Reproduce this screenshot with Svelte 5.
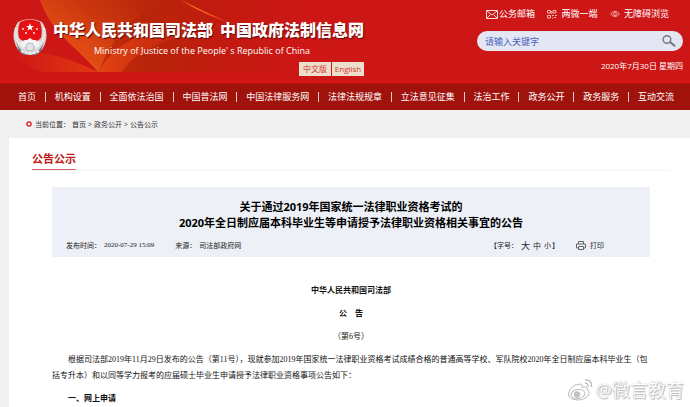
<script>
  const navItems = [
    "首页",
    "机构设置",
    "全面依法治国",
    "中国普法网",
    "中国法律服务网",
    "法律法规规章",
    "立法意见征集",
    "法治工作",
    "政务公开",
    "政务服务",
    "互动交流",
  ];

  let keyword = $state("");
</script>

<div class="page">
  <header>
    <svg class="swoosh" viewBox="0 0 300 72" aria-hidden="true">
      <defs>
        <linearGradient id="glow" x1="0" x2="1" y1="0" y2="0">
          <stop offset="0" stop-color="#d8380f" />
          <stop offset="0.15" stop-color="#c8300c" />
          <stop offset="0.4" stop-color="#b8260a" />
          <stop offset="0.65" stop-color="#c01c0e" />
          <stop offset="1" stop-color="#cd1616" />
        </linearGradient>
        <linearGradient id="flare" x1="0" x2="1" y1="1" y2="0">
          <stop offset="0" stop-color="#f05a1c" />
          <stop offset="0.4" stop-color="#e04c14" stop-opacity="0.8" />
          <stop offset="1" stop-color="#b72b0a" stop-opacity="0" />
        </linearGradient>
        <linearGradient id="corner" x1="0" x2="1" y1="0" y2="0">
          <stop offset="0" stop-color="#cd1616" />
          <stop offset="1" stop-color="#e23a12" />
        </linearGradient>
        <linearGradient id="fold" x1="0" x2="1" y1="0" y2="0">
          <stop offset="0" stop-color="#ea4a12" stop-opacity="0.8" />
          <stop offset="1" stop-color="#cd1616" stop-opacity="0" />
        </linearGradient>
        <linearGradient id="streak" x1="0" x2="1" y1="0" y2="0">
          <stop offset="0" stop-color="#ff9a26" />
          <stop offset="0.5" stop-color="#f0501e" />
          <stop offset="1" stop-color="#cd1616" stop-opacity="0" />
        </linearGradient>
      </defs>
      <path d="M12 52 Q50 48 98 72 H42 Q22 66 12 52Z" fill="url(#corner)" />
      <path d="M40 0 C52 34 74 44 98 72 H300 V0Z" fill="url(#glow)" />
      <path d="M40 0 C52 34 74 44 98 72 C110 48 120 18 170 0Z" fill="url(#flare)" />
      <path d="M98 72 C122 30 180 16 250 26 C190 30 138 44 122 72Z" fill="url(#fold)" />
      <path d="M181 0 Q208 14 242 27 Q207 17 181 0Z" fill="url(#streak)" />
    </svg>

    <div class="brand">
      <svg class="emblem" viewBox="0 0 34 38" role="img" aria-label="国徽">
        <path d="M5 4 Q17 -2 29 4 Q35 13 33 22 Q31 33 22 37 H12 Q3 33 1 22 Q-1 13 5 4Z" fill="#d9d5d0" />
        <path d="M3 24 Q8 36 17 37 Q26 36 31 24 L28 33 L22 37 H12 L6 33Z" fill="#5d7592" />
        <path d="M7 4 Q17 -1 27 4 Q30 12 28 20 Q23 25 17 25 Q11 25 6 20 Q4 12 7 4Z" fill="#e60f14" />
        <path d="M17 5 l1 3 h3 l-2.4 1.8 .9 3 -2.5 -1.8 -2.5 1.8 .9 -3 L13 8 h3Z" fill="#fff" />
        <g fill="#ffe7df">
          <circle cx="10" cy="11" r="1" />
          <circle cx="13" cy="15" r="1" />
          <circle cx="21" cy="15" r="1" />
          <circle cx="24" cy="11" r="1" />
        </g>
        <path d="M7 24 l5 -2 2 0 3 -2 3 2 2 0 5 2 -2 5 H9Z" fill="#f4f4f4" />
        <path d="M3 10 q-2 14 9 21 M31 10 q2 14 -9 21" fill="none" stroke="#eee" stroke-width="2" stroke-dasharray="2 1" />
        <circle cx="17" cy="29" r="4" fill="#e3e6e8" stroke="#b4bcc4" />
        <path d="M8 33 Q17 38 26 33" fill="none" stroke="#f2f2f2" stroke-width="2" stroke-dasharray="3 1" />
      </svg>
      <div class="names">
        <h1><span>中华人民共和国司法部</span><span>中国政府法制信息网</span></h1>
        <p class="english">Ministry of Justice of the People' s Republic of China</p>
        <div class="langs">
          <button type="button">中文版</button>
          <button type="button">English</button>
        </div>
      </div>
    </div>

    <div class="tools">
      <div class="links">
        <a class="mail" href="#mail">
          <svg width="12" height="9" viewBox="0 0 12 9" fill="none" stroke="#ffd9d5">
            <path d="M.5 .5 H11.5 V8.5 H.5Z M1 1 L6 5 L11 1 M1 8 L4.500 4.500 M11 8 L7.500 4.500" />
          </svg>
          公务邮箱
        </a>
        <a href="#media">
          <svg width="10" height="10" viewBox="0 0 10 10" fill="none" stroke="#f7b5ae">
            <path d="M.5 1.500 H3.500 V4 H.5Z M6 1.500 H9 V4 H6Z M.5 6.500 H3.500 V9 H.5Z M5 6.500 H7 M8 6.500 H10 M5 9 H6 M7 8.500 H9 M4.800 2 V5" />
          </svg>
          两微一端
        </a>
        <a href="#access">
          <svg width="10" height="8" viewBox="0 0 10 8" fill="none" stroke="#f3a9a3">
            <path d="M.5 4 Q5 -1.500 9.500 4 Q5 9 .5 4Z" />
            <circle cx="5" cy="4" r="1.500" />
          </svg>
          无障碍浏览
        </a>
      </div>
      <form class="search" onsubmit={(e) => e.preventDefault()}>
        <input type="text" placeholder="请输入关键字" aria-label="请输入关键字" bind:value={keyword} />
        <button type="submit" aria-label="搜索">
          <svg width="14" height="12" viewBox="0 0 14 12" fill="none" stroke="#777">
            <circle cx="5" cy="4.500" r="3.800" stroke-width="1.400" />
            <path d="M8 7 L12.500 10.800" stroke-width="2" stroke-linecap="round" />
          </svg>
        </button>
      </form>
      <div class="date">2020年7月30日 星期四</div>
    </div>
  </header>

  <nav>
    {#each navItems as item, i}
      {#if i > 0}<i class="bar"></i>{/if}
      <a href="#nav{i}">{item}</a>
    {/each}
  </nav>

  <div class="crumbs">
    <svg width="6" height="6" viewBox="0 0 6 6" aria-hidden="true">
      <circle cx="3" cy="3" r="2" fill="#fff" stroke="#e02828" stroke-width="1.500" />
    </svg>
    <span class="label">当前位置：</span>
    <a href="#home">首页</a> &gt; <a href="#open">政务公开</a> &gt; <a href="#notice">公告公示</a>
  </div>

  <main>
    <div class="section"><h2>公告公示</h2></div>

    <article>
      <div class="head">
        <h3>关于通过2019年国家统一法律职业资格考试的<br />2020年全日制应届本科毕业生等申请授予法律职业资格相关事宜的公告</h3>
        <div class="meta">
          <span>发布时间：</span>
          <time>2020-07-29 15:09</time>
          <span class="source">来源：</span>
          <span>司法部政府网</span>
          <div class="sizes">
            <span>【字号：</span>
            <button type="button" class="large">大</button>
            <button type="button" class="medium">中</button>
            <button type="button">小</button><span class="close">】</span>
          </div>
          <button type="button" class="print">
            <svg width="10" height="9" viewBox="0 0 10 9" fill="none" stroke="#666">
              <path d="M2.500 3 V.5 H7.500 V3 M2.500 7 H.5 V3 H9.500 V7 H7.500 M2.500 5.500 H7.500 V8.500 H2.500Z" />
            </svg>
            打印
          </button>
        </div>
      </div>

      <div class="body">
        <p class="center strong">中华人民共和国司法部</p>
        <p class="center strong">公　告</p>
        <p class="center">（第6号）</p>
        <p>根据司法部2019年11月29日发布的公告（第11号），现就参加2019年国家统一法律职业资格考试成绩合格的普通高等学校、军队院校2020年全日制应届本科毕业生（包括专升本）和以同等学力报考的应届硕士毕业生申请授予法律职业资格事项公告如下：</p>
        <p class="strong">一、网上申请</p>
      </div>
    </article>
  </main>

  <div class="watermark">
    <svg width="26" height="24" viewBox="0 0 26 24" fill="none" stroke="#bbb">
      <path d="M10 7 Q14 5 15 7 Q15.500 8 15 9.500 Q20 8 20.500 10 Q20.500 11 20 12 Q23 13 22 16 Q20 21 12 22 Q3 22 1.500 17 Q1 12 6.500 8 Q10 5.500 10 7Z" fill="#fff" />
      <ellipse cx="11" cy="16" rx="7" ry="4.500" transform="rotate(-8 11 16)" fill="#fff" />
      <circle cx="10" cy="16.500" r="2.800" fill="#c4c4c4" />
      <path d="M18 2 Q25 1 24.500 9 M18 5 Q21.500 5 21 8.500" stroke-width="1.500" />
    </svg>
    <span>@微言教育</span>
  </div>
</div>

<style>
  :global(body) {
    margin: 0;
    background: #f0f0f0;
  }

  .page {
    position: relative;
    display: flex;
    flex-direction: column;
    height: 100vh;
    overflow: hidden;
    font-family: "Open Sans", "Noto Sans CJK SC", sans-serif;
    font-size: 9px;
  }

  h1,
  h2,
  h3,
  p {
    margin: 0;
  }

  a {
    color: inherit;
    text-decoration: none;
  }

  button {
    padding: 0;
    border: none;
    background: none;
    color: inherit;
    font: inherit;
    cursor: pointer;
  }

  header {
    position: relative;
    display: flex;
    justify-content: space-between;
    flex-shrink: 0;
    height: 82px;
    border-bottom: 1px solid #f0100f;
    background: #cd1616;
    color: #fff;
  }

  .swoosh {
    position: absolute;
    top: 0;
    left: 0;
    width: 300px;
    height: 72px;
  }

  .brand {
    position: relative;
    display: flex;
    gap: 6px;
    padding: 18px 0 0 13px;
  }

  .emblem {
    width: 34px;
    height: 38px;
  }

  .names {
    display: flex;
    flex-direction: column;
  }

  h1 {
    display: flex;
    gap: 7px;
    font-size: 16px;
    font-weight: 900;
    line-height: 24px;
    text-shadow: 1px 1px 1px #5a0a05;
  }

  .english {
    padding-left: 41px;
    font-size: 9px;
    line-height: 18px;
  }

  .langs {
    display: flex;
    gap: 1px;
    align-self: flex-end;
    padding-top: 2px;
  }

  .langs button {
    width: 32px;
    height: 14px;
    background: #ece0cc;
    color: #d8322c;
    font-size: 8px;
    line-height: 14px;
  }

  .tools {
    position: relative;
    display: flex;
    flex-direction: column;
    padding: 8px 7px 0 0;
  }

  .links {
    display: flex;
    justify-content: space-between;
    padding: 0 14px 0 9px;
    line-height: 12px;
  }

  .links a {
    display: flex;
    gap: 4px;
    align-items: center;
  }

  .links .mail {
    gap: 1px;
  }

  .search {
    display: flex;
    align-items: center;
    box-sizing: border-box;
    width: 206px;
    height: 20px;
    margin-top: 11px;
    padding: 0 7px 0 8px;
    border-radius: 10px;
    background: #e4e7f3;
  }

  .search input {
    flex: 1;
    min-width: 0;
    padding: 0;
    border: none;
    outline: none;
    background: none;
    color: #4a5fc0;
    font: inherit;
  }

  .search input::placeholder {
    color: #4a5fc0;
  }

  .search button {
    display: flex;
  }

  .date {
    margin-top: 9px;
    font-size: 8px;
    line-height: 12px;
    text-align: right;
  }

  nav {
    display: flex;
    align-items: center;
    justify-content: space-between;
    flex-shrink: 0;
    height: 27px;
    padding: 0 16px 0 18px;
    background: #a0120c;
    color: #fff;
    white-space: nowrap;
  }

  .bar {
    width: 1px;
    height: 10px;
    background: #e8c8c4;
  }

  .crumbs {
    display: flex;
    gap: 2px;
    align-items: center;
    flex-shrink: 0;
    height: 28px;
    padding-left: 26px;
    color: #333;
    font-size: 7px;
  }

  .label {
    margin-left: 1px;
  }

  main {
    flex: 1;
    min-height: 0;
    margin-left: 9px;
    padding: 11px 20px 0 23px;
    background: #fff;
  }

  .section {
    display: flex;
    border-bottom: 1px solid #f4f4f4;
  }

  h2 {
    border-bottom: 1px solid #d86060;
    color: #c01818;
    font-size: 11px;
    line-height: 20px;
  }

  article {
    padding: 16px 20px 0;
  }

  .head {
    padding: 12px 14px 4px;
    background: #edf0f6;
  }

  h3 {
    color: #000;
    font-size: 11px;
    line-height: 16px;
    text-align: center;
  }

  .meta {
    display: flex;
    align-items: center;
    gap: 3px;
    height: 16px;
    padding: 6px 0 0;
    color: #222;
    font-family: "Liberation Serif", "Noto Sans CJK SC", serif;
    font-size: 7px;
  }

  .source {
    margin-left: 18px;
  }

  .sizes {
    display: flex;
    gap: 3px;
    align-items: center;
    margin-left: auto;
  }

  .large {
    font-size: 9px;
  }

  .medium {
    font-size: 8px;
  }

  .close {
    margin-left: -2px;
  }

  .print {
    display: flex;
    gap: 4px;
    align-items: center;
    margin: 0 32px 0 14px;
  }

  .body {
    display: flex;
    flex-direction: column;
    gap: 7px;
    padding-top: 26px;
    color: #111;
    font-family: "Liberation Serif", "Noto Sans CJK SC", serif;
    font-size: 8px;
    line-height: 16px;
  }

  .body p {
    text-indent: 2em;
  }

  .body .center {
    text-align: center;
    text-indent: 0;
  }

  .strong {
    font-weight: bold;
  }

  .watermark {
    position: absolute;
    right: 6px;
    bottom: 5px;
    display: flex;
    gap: 3px;
    align-items: center;
    color: #fff;
    font-size: 18px;
    line-height: 24px;
    text-shadow: 0 0 1px #999, 1px 1px 1px #bbb;
  }
</style>
